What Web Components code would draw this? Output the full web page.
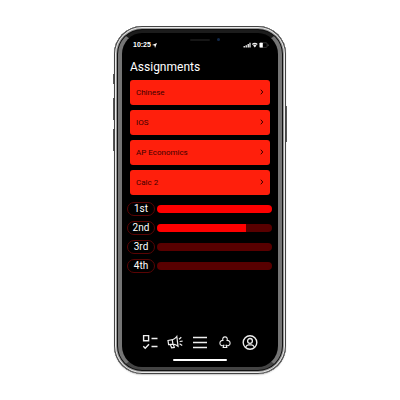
<!DOCTYPE html>
<html lang="en">
<head>
<meta charset="utf-8">
<meta name="viewport" content="width=device-width">
<title>Assignments</title>
<style>
html,body{margin:0;height:100%;background:#fff}
body{font-family:Roboto,"Liberation Sans",sans-serif;display:grid;place-items:center}
</style>
</head>
<body>
<phone-frame>
  <status-bar slot="status" time="10:25"></status-bar>
  <screen-title>Assignments</screen-title>
  <course-list>
    <course-card>Chinese</course-card>
    <course-card>IOS</course-card>
    <course-card>AP Economics</course-card>
    <course-card>Calc 2</course-card>
  </course-list>
  <quarter-list>
    <quarter-bar label="1st" value="100"></quarter-bar>
    <quarter-bar label="2nd" value="77"></quarter-bar>
    <quarter-bar label="3rd" value="0"></quarter-bar>
    <quarter-bar label="4th" value="0"></quarter-bar>
  </quarter-list>
  <tab-bar slot="tabs"></tab-bar>
</phone-frame>
<script>
const define = (name, html, setup) => customElements.define(name, class extends HTMLElement {
  constructor() {
    super();
    this.attachShadow({mode: "open"}).innerHTML = html;
  }
  connectedCallback() { if (setup) setup(this, this.shadowRoot); }
});

define("status-bar", `
<style>
:host{display:flex;align-items:center;gap:1px;padding:0 9px 0 11px;height:10px;color:#fff;font:700 7px/10px "Liberation Sans",Arial,sans-serif}
.icons{margin-left:auto}
svg{display:block}
</style>
<span class="time"></span>
<svg width="5" height="5" viewBox="0 0 10 10" fill="#fff"><path d="M10 0 6 10 5 5 0 4z"/></svg>
<svg class="icons" width="26" height="6" viewBox="0 0 26 6" fill="#fff">
<path d="M.500 4H2v1.500H.500zM2.500 3.200H4v2.300H2.500zM4.500 2.100H6v3.400H4.500zM6.300 .8h1.400v4.700H6.300z" fill="#ddd"/>
<path d="M8.900 2a4 4 0 0 1 5.800 0l-.9.900a2.900 2.900 0 0 0-4 0zM10.100 3.400a2.500 2.500 0 0 1 3.400 0l-1.700 2z" fill="#eee"/>
<rect x="16.500" y=".8" width="7.600" height="4.600" rx="1" fill="none" stroke="#555" stroke-width=".6"/>
<rect x="16.600" y=".8" width="3.200" height="4.600" rx=".5"/><path d="M24.800 2.400h.6v1.500h-.6z" fill="#777"/>
</svg>`, (el, root) => root.querySelector(".time").textContent = el.getAttribute("time"));

define("screen-title", `
<style>:host{display:block;padding:0 8px}h1{margin:0;font:400 12px/16px Roboto,"Liberation Sans",sans-serif;color:#fff}</style>
<h1><slot></slot></h1>`);

define("course-list", `<style>:host{display:flex;flex-direction:column;gap:5px;padding:0 8px;margin-top:5px}</style><slot></slot>`);

define("course-card", `
<style>
:host{display:block}
button{display:flex;align-items:center;justify-content:space-between;width:100%;height:25px;padding:0 6px 1px;border:0;border-radius:3px;background:#ff1f0c;color:#3c0000;font:400 8px Roboto,"Liberation Sans",sans-serif}
svg{display:block}
</style>
<button type="button"><span><slot></slot></span>
<svg width="4" height="6" viewBox="0 0 4 6" fill="none" stroke="#3c0000"><path d="m.8 .7 2 2.300-2 2.300"/></svg></button>`);

define("quarter-list", `<style>:host{display:flex;flex-direction:column;gap:5px;padding:0 6px 0 5px;margin-top:7px}</style><slot></slot>`);

define("quarter-bar", `
<style>
:host{display:flex;align-items:center;gap:2px}
label{box-sizing:border-box;flex:none;width:28px;height:14px;border:1px solid #5a0404;border-radius:7px;text-align:center;font-size:10px;line-height:12px;color:#fff}
progress{appearance:none;-webkit-appearance:none;display:block;flex:1;min-width:0;width:0;height:8px;border:0;border-radius:4px;overflow:hidden;background:#580000}
progress::-webkit-progress-bar{background:#580000}
progress::-webkit-progress-value{background:#f00}
</style>
<label for="p"></label><progress id="p" max="100"></progress>`, (el, root) => {
  root.querySelector("label").textContent = el.getAttribute("label");
  root.querySelector("progress").value = +el.getAttribute("value");
});

define("tab-bar", `
<style>
:host{display:block}
nav{display:flex;justify-content:center;gap:9px}
button{display:block;width:16px;height:16px;padding:0;border:0;background:none}
svg{display:block;fill:none;stroke:#eee;stroke-width:1.2}
.home{width:54px;height:2px;border-radius:1px;background:#fff;margin:9px auto 0}
</style>
<nav>
<button type="button" aria-label="Tasks"><svg width="16" height="16" viewBox="0 0 16 16"><path d="M1.600 1.600h5v5.200h-5zM9.500 4.500H15.500M9.500 12.500H15.500M1.300 12.300 3.200 14.200 7 10.300" stroke-width="1.400"/></svg></button>
<button type="button" aria-label="Announcements"><svg width="16" height="16" viewBox="0 0 16 16"><path d="M1 6.500 5.500 5.700Q8.200 4.800 9.800 2.500L11 12.200Q8.800 10.400 6 10.200L1.600 10.500ZM3.300 10.500 4.600 13.800 7.300 13.400 6.300 10.300M5.300 5.800 5.900 10.200M12 5.200 14.300 3.200M12.600 7.500 15.600 7.200M12.600 9.800 15.200 11.500"/></svg></button>
<button type="button" aria-label="Menu"><svg width="16" height="16" viewBox="0 0 16 16"><path d="M1 3.500H15M1 8.500H15M1 13.500H15" stroke-width="1.300"/></svg></button>
<button type="button" aria-label="Clubs"><svg width="16" height="16" viewBox="0 0 16 16"><path d="M5.900 6.400C5.200 4.400 6.300 2.900 8 2.900S10.800 4.400 10.100 6.400C12 6.300 13.100 7.500 13.100 9.200C13.100 11.600 10.500 12.400 8.900 10.900L9.800 13.500H6.200L7.100 10.900C5.500 12.400 2.900 11.600 2.900 9.200C2.900 7.500 4 6.300 5.900 6.400Z" stroke-width="1.100"/></svg></button>
<button type="button" aria-label="Profile"><svg width="16" height="16" viewBox="0 0 16 16"><circle cx="8" cy="8.500" r="6.800" stroke-width="1.400"/><circle cx="8" cy="6.900" r="2.400" stroke-width="1.300"/><path d="M3.700 13.100Q4.500 11 6.500 10.900H9.500Q11.500 11 12.300 13.100"/></svg></button>
</nav>
<div class="home"></div>`);

define("phone-frame", `
<style>
:host{position:relative;box-sizing:border-box;display:flex;flex-direction:column;width:43vw;min-width:172px;min-height:max(347px,87vh);padding:14px 8px 13px;border-radius:28px;background:#000;
box-shadow:inset 0 0 0 1px #444,inset 0 0 0 2px #e8e8e8,inset 0 0 0 3px #999,inset 0 0 0 4px #111,0 1px 2px -1px #555}
:host::before{content:"";position:absolute;inset:4px;border-radius:24px;border:solid;border-width:3px 4px;border-color:#1c1c1c #757575 #444;pointer-events:none}
.side{position:absolute;width:1px;background:#555}
.mute{left:-1px;top:48px;height:10px}
.up{left:-1px;top:72px;height:22px}
.down{left:-1px;top:103px;height:22px}
.power{right:-1px;top:80px;height:36px}
.speaker{position:absolute;top:13px;left:50%;width:20px;height:2px;margin-left:-10px;border-radius:1px;background:#161616}
.camera{position:absolute;top:12px;left:50%;width:3px;height:3px;margin-left:17px;border-radius:50%;background:#12294a}
main{margin-top:9px;flex:1}
</style>
<i class="side mute"></i><i class="side up"></i><i class="side down"></i><i class="side power"></i>
<i class="speaker"></i><i class="camera"></i>
<slot name="status"></slot>
<main><slot></slot></main>
<slot name="tabs"></slot>`);
</script>
</body>
</html>
